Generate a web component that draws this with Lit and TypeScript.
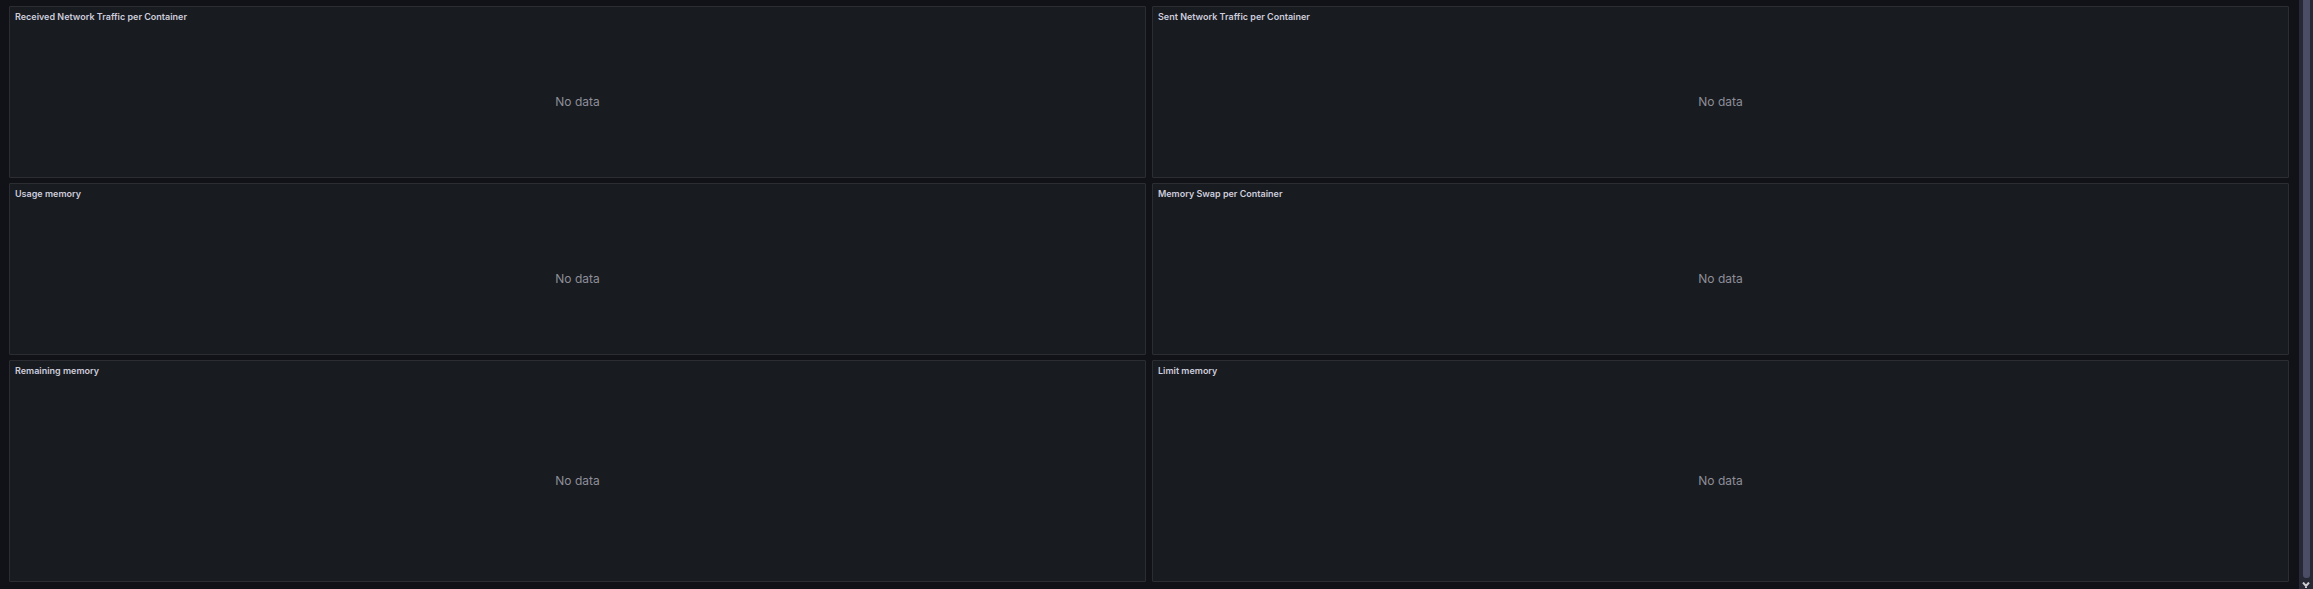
import { LitElement, html, css } from "lit";
import { customElement, property } from "lit/decorators.js";

@customElement("dashboard-panel")
class DashboardPanel extends LitElement {
  static styles = css`
    :host {
      display: flex;
      min-width: 0;
    }
    .panel {
      flex: 1;
      display: flex;
      flex-direction: column;
      box-sizing: border-box;
      border: 1px solid #2b2d32;
      border-radius: 1px;
      background: #181b1f;
    }
    .title {
      margin: 0;
      padding: 0 5px;
      font-size: 9px;
      font-weight: 600;
      line-height: 20px;
      color: #ccccdc;
    }
    .content {
      flex: 1;
      display: flex;
      align-items: center;
      justify-content: center;
      margin: 0;
      font-size: 12px;
      line-height: 18px;
      color: #8e8e99;
    }
  `;

  @property() heading = "";

  render() {
    return html`
      <section class="panel" aria-label=${this.heading}>
        <h2 class="title">${this.heading}</h2>
        <p class="content">No data</p>
      </section>
    `;
  }
}

@customElement("app-root")
class AppRoot extends LitElement {
  static styles = css`
    :host {
      display: flex;
      min-height: 100vh;
      background: #111217;
      font-family: Inter, "Liberation Sans", sans-serif;
    }
    .grid {
      flex: 1;
      display: grid;
      grid-template-columns: 1fr 1fr;
      grid-template-rows: 172px 172px 222px;
      gap: 5px 6px;
      padding: 6px 10px 7px 9px;
    }
    .scrollbar {
      display: flex;
      flex-direction: column;
      align-items: center;
      width: 14px;
      background: #262834;
    }
    .thumb {
      flex: 1;
      width: 7px;
      border-radius: 0 0 3px 3px;
      background: #4a4d65;
    }
    .arrow {
      display: block;
      width: 8px;
      height: 7px;
      padding: 4px 0 0;
      fill: none;
      stroke: #cdcdd2;
      stroke-width: 2;
    }
  `;

  private panels = [
    "Received Network Traffic per Container",
    "Sent Network Traffic per Container",
    "Usage memory",
    "Memory Swap per Container",
    "Remaining memory",
    "Limit memory",
  ];

  render() {
    return html`
      <main class="grid">
        ${this.panels.map((name) => html`<dashboard-panel .heading=${name}></dashboard-panel>`)}
      </main>
      <div class="scrollbar" aria-hidden="true">
        <div class="thumb"></div>
        <svg class="arrow" viewBox="0 0 8 7"><path d="M1 0.5 L4 4 L7 0.5 M4 3.5 V6" /></svg>
      </div>
    `;
  }
}
